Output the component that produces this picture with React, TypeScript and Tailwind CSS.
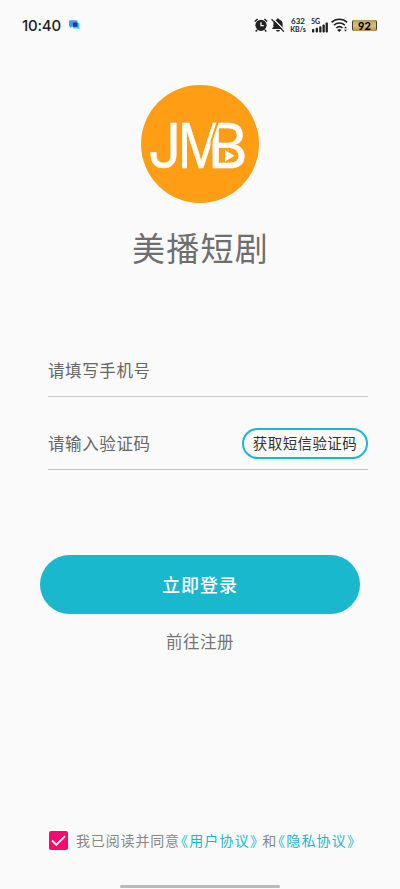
import { useState } from 'react'

function StatusBar() {
  return (
    <header className="flex h-[50px] items-center pl-[22px] pr-[23px] text-[#222]">
      <span className="w-[40px] font-['Inter'] text-[15px] leading-none font-medium tracking-[-0.2px] whitespace-nowrap">10:40</span>
      <svg className="ml-[7px] h-[10px] w-[11px]" viewBox="0 0 11 10">
        <path d="M4 3h5.5a1 1 0 0 1 1 1v5.500L9 8.500H5a1 1 0 0 1-1-1z" fill="#25d8ea" />
        <path d="M1 .3h6.500a1 1 0 0 1 1 1v5.500H3L1 8V6.800a1 1 0 0 1-1-1V1.300a1 1 0 0 1 1-1z" fill="#4b93fa" />
        <rect x="4" y="2.500" width="4.500" height="4.300" rx=".6" fill="#0c3f9e" />
      </svg>

      <div className="ml-auto flex items-center">
        <svg className="h-[14px] w-[14px]" viewBox="0 0 14 14" fill="none">
          <circle cx="7" cy="7.3" r="5.6" fill="#222" />
          <path d="M.8 3.5 3.6 1M13.2 3.5 10.4 1M3 12l-1.3 1.5M11 12l1.3 1.5" stroke="#222" strokeWidth="1.6" />
          <path d="M7 4.2v3.4h2.8" stroke="#fafafa" strokeWidth="1.3" />
        </svg>
        <svg className="ml-[3px] h-[14px] w-[14px]" viewBox="0 0 14 14">
          <path d="M7 .5c.8 0 1.200.5 1.200 1.100 2.200.6 3.400 2.200 3.400 4.200v3.200l1.600 2H.8l1.600-2V5.800c0-2 1.200-3.600 3.400-4.200C5.800 1 6.200.5 7 .5zM5 12h4c-.3 1.200-1 1.600-2 1.600S5.300 13.200 5 12z" fill="#222" />
          <path d="M1.500.2 14 12.700" stroke="#fafafa" strokeWidth="1.300" />
          <path d="M.5 1.200 12.900 13.600" stroke="#222" strokeWidth="1.300" />
        </svg>
        <div className="ml-[4px] flex w-[18px] flex-col items-center font-['Lato'] text-[8px] leading-[8px] font-bold">
          <span>632</span>
          <span className="text-[7px] leading-[8px]">KB/s</span>
        </div>
        <div className="relative ml-[4px] h-[15px] w-[17px]">
          <span className="absolute top-0 left-0 font-['Lato'] text-[7px] leading-[7px] font-bold">5G</span>
          <svg className="h-[15px] w-[17px]" viewBox="0 0 17 15" fill="#222">
            <rect x="1" y="11" width="2.300" height="3.500" rx=".8" />
            <rect x="4.700" y="9.800" width="2.300" height="4.700" rx=".8" />
            <rect x="8.200" y="8.300" width="2.300" height="6.200" rx=".8" />
            <rect x="11.500" y="6.500" width="2.300" height="8" rx=".8" />
            <rect x="14.600" y="4.500" width="2.300" height="10" rx=".8" />
          </svg>
        </div>
        <svg className="ml-[3px] h-[14px] w-[17px]" viewBox="0 0 17 14" fill="none" stroke="#222" strokeWidth="1.600">
          <path d="M.6 4.400c4.200-4.200 11.400-4.200 15.600 0" />
          <path d="M2.900 7.300c3-3 8-3 11 0" />
          <path d="M5.300 10c1.800-1.700 4.400-1.700 6.200 0" />
          <path d="M6.200 11.900a3.500 3.500 0 0 1 4.200 0L8.300 14z" fill="#222" stroke="none" />
          <path d="M14.500 8.600 16 10.300h-3zM14.500 13.400 13 11.700h3z" fill="#222" stroke="none" />
        </svg>
        <div className="ml-[4px] flex h-[11px] w-[25px] items-center justify-center rounded-[2px] border-x-[1.5px] border-[#4a3e28] bg-linear-to-b from-[#b79a57] via-[#dcc07c] to-[#b5924b] font-['Lato'] text-[11px] leading-none font-black text-black">
          92
        </div>
      </div>
    </header>
  )
}

function Logo() {
  return (
    <svg className="h-[118px] w-[118px]" viewBox="0 0 118 118">
      <defs>
        <clipPath id="logo-left">
          <path d="M38 34h38.500L69.500 56v30H38z" />
        </clipPath>
        <clipPath id="logo-right">
          <path d="M79 34h30v52H70V60z" />
        </clipPath>
      </defs>
      <circle cx="59" cy="59" r="59" fill="#ff9d14" />
      <g fill="#fff" stroke="#fff" strokeWidth=".4" fontFamily="Inter, sans-serif" fontSize="61.5">
        <text transform="translate(7 82.700) scale(.95 1)">J</text>
        <g clipPath="url(#logo-left)">
          <text transform="translate(36.800 82.700) scale(.84 1)">M</text>
        </g>
        <g clipPath="url(#logo-right)">
          <text transform="translate(66.500 82.700) scale(1 1)">B</text>
        </g>
      </g>
      <path d="M84 65v11.500l9.500-5.700z" fill="#fff" />
    </svg>
  )
}

export default function App() {
  const [agreed, setAgreed] = useState(true)

  return (
    <div className="flex h-[889px] w-[400px] flex-col overflow-hidden bg-[#fafafa] font-['Noto_Sans_CJK_SC',sans-serif]">
      <StatusBar />

      <div className="mt-[35px] flex flex-col items-center">
        <Logo />
        <h1 className="mt-[20px] pl-px text-[33px] leading-[48px] tracking-[1.2px] text-[#6e6e6e]">美播短剧</h1>
      </div>

      <div className="mt-[74px] mr-[32px] ml-[48px] flex flex-col text-[16.5px] tracking-[0.6px] text-[#666]">
        <div className="flex h-[52px] items-center border-b border-[#cacaca] pb-px">请填写手机号</div>
        <div className="mt-[21px] flex h-[52px] items-center justify-between border-b border-[#c4c4c4] pb-px">
          <span>请输入验证码</span>
          <button className="h-[31px] w-[126px] rounded-full border-2 border-[#1bb8cd] pt-px text-[14.5px] leading-none tracking-[0.4px] whitespace-nowrap text-[#333]">
            获取短信验证码
          </button>
        </div>
      </div>

      <button className="mx-[40px] mt-[85px] h-[59px] rounded-full bg-[#1ab8cd] text-[18px] font-medium tracking-[1px] text-white">
        立即登录
      </button>
      <a className="mt-[15px] text-center text-[16.5px] leading-[24px] tracking-[0.5px] text-[#757575]">前往注册</a>

      <div className="mt-auto mb-[35px] ml-[49px] flex items-center text-[14px] leading-[20px] tracking-[0.85px] whitespace-nowrap text-[#888] [font-feature-settings:'halt']">
        <button
          onClick={() => setAgreed(!agreed)}
          className="mr-[8px] flex h-[19px] w-[19px] items-center justify-center rounded-[2px] bg-[#ff0768]"
        >
          {agreed && (
            <svg className="h-[19px] w-[19px]" viewBox="0 0 19 19" fill="none" stroke="#fff" strokeWidth="2">
              <path d="m3 9.500 4.300 4.300 8.700-8.700" />
            </svg>
          )}
        </button>
        <span className="-mt-px">我已阅读并同意</span>
        <span className="-mt-px ml-px tracking-[1.2px] text-[#1bb8cd]">《用户协议》</span>
        <span className="-mt-px ml-[4px]">和</span>
        <span className="-mt-px ml-px tracking-[1.2px] text-[#1bb8cd]">《隐私协议》</span>
      </div>
      <div className="mb-px h-[3px] w-[160px] shrink-0 self-center rounded-full bg-[#bababa]" />
    </div>
  )
}
